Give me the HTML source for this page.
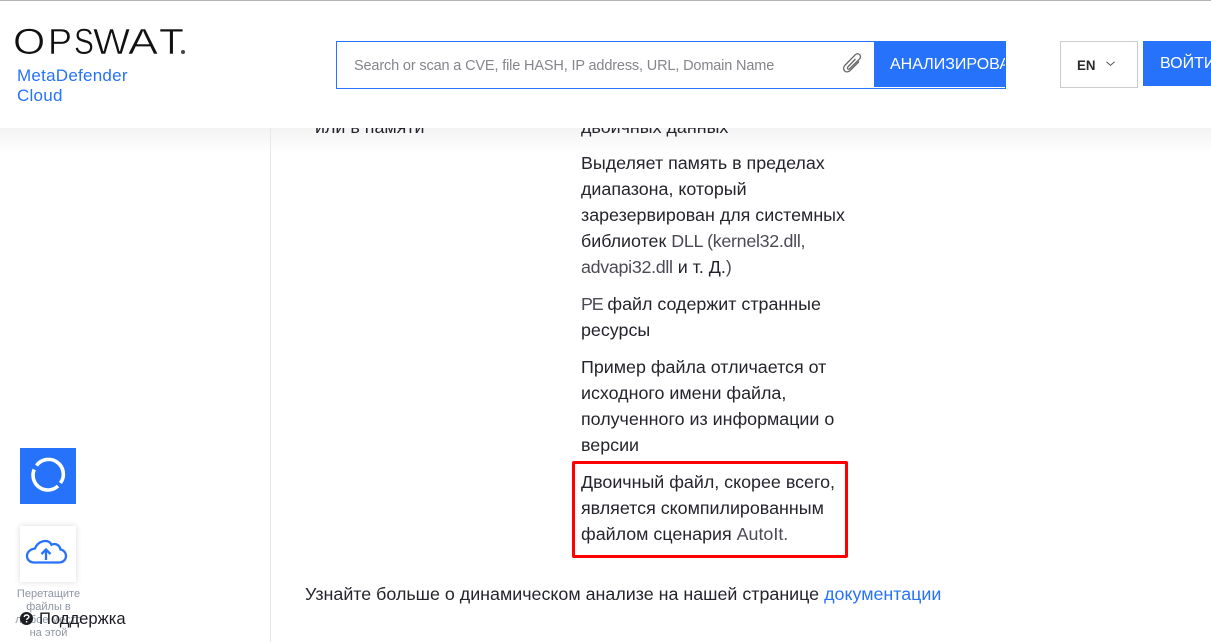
<!DOCTYPE html>
<html lang="ru">
<head>
<meta charset="utf-8">
<title>MetaDefender Cloud</title>
<style>
html,body{margin:0;padding:0;background:#fff}
body{width:1211px;height:642px;overflow:hidden;position:relative;font-family:"Liberation Sans",sans-serif;color:#1d1d25}
.a{position:absolute;white-space:nowrap}
.l{position:absolute;left:581px;font-size:17.870px;line-height:26px;white-space:nowrap;color:#24242c}
.g{color:#4b4b55}
.n{letter-spacing:-.3px}
#hdr{position:absolute;left:0;top:0;width:1211px;height:128px;background:#fff;z-index:5;border-top:1px solid #b5b5b5;box-sizing:border-box;overflow:hidden}
#shade{position:absolute;left:0;top:128px;width:1211px;height:25px;background:linear-gradient(#f3f3f3,#fff)}
.lg{position:absolute;top:21px;font-size:36px;line-height:40px;color:#111;transform-origin:left center;-webkit-text-stroke:.6px #fff}
</style>
</head>
<body>
<div id="shade"></div>
<div class="a" style="left:270px;top:128px;width:1px;height:514px;background:#e8e8e8"></div>

<div class="a" style="left:315px;top:114px;font-size:17.870px;line-height:26px;color:#24242c">или в памяти</div>
<div class="l" style="top:114px">двоичных данных</div>

<div class="l" style="top:150px">Выделяет память в пределах</div>
<div class="l" style="top:176px">диапазона, который</div>
<div class="l" style="top:202px">зарезервирован для системных</div>
<div class="l" style="top:228px">библиотек <span class="g n">DLL (kernel32.dll,</span></div>
<div class="l" style="top:254px"><span class="g n">advapi32.dll</span> и т. Д.<span class="g">)</span></div>
<div class="l" style="top:291px"><span class="g" style="letter-spacing:-1.200px">PE</span> файл содержит странные</div>
<div class="l" style="top:317px">ресурсы</div>
<div class="l" style="top:354px">Пример файла отличается от</div>
<div class="l" style="top:380px">исходного имени файла,</div>
<div class="l" style="top:406px">полученного из информации о</div>
<div class="l" style="top:432px">версии</div>
<div class="l" style="top:469px">Двоичный файл, скорее всего,</div>
<div class="l" style="top:495px">является скомпилированным</div>
<div class="l" style="top:521px">файлом сценария <span class="g">AutoIt.</span></div>

<div class="a" style="left:572px;top:461px;width:276px;height:97px;border:3.500px solid #fe0000;border-radius:2px;box-sizing:border-box"></div>

<div class="a" style="left:305px;top:581px;font-size:17.870px;line-height:26px;color:#24242c">Узнайте больше о динамическом анализе на нашей странице <span style="color:#2672fb">документации</span></div>

<div class="a" style="left:20px;top:448px;width:56px;height:56px;background:#2672fb"></div>
<svg class="a" style="left:20px;top:448px" width="56" height="56" viewBox="0 0 56 56">
<path d="M16.500 17.500A14.800 14.800 0 0 1 40.500 35" fill="none" stroke="#fff" stroke-width="3.600"/>
<path d="M38 38A14.800 14.800 0 0 1 14.200 21.500" fill="none" stroke="#fff" stroke-width="3.600"/>
</svg>

<div class="a" style="left:20px;top:526px;width:56px;height:56px;background:#fff;box-shadow:0 0 6px rgba(0,0,0,.14)"></div>
<svg class="a" style="left:20px;top:526px" width="56" height="56" viewBox="0 0 56 56">
<path d="M14 36.500h25c4 0 7-2.800 7-6.500 0-3.500-2.500-6-5.500-6.500-.5-3-3-5.500-6-5.500-1.200 0-2.200.3-3 .8C30 15.500 27.500 15 25.500 15c-5 0-9 3.200-10.500 7.500C10.500 23 7 26 7 30c0 3.700 3 6.500 7 6.500z" fill="none" stroke="#2672fb" stroke-width="2.300"/>
<path d="M26 34V23.500M21.500 28l4.500-4.500 4.500 4.500" fill="none" stroke="#2672fb" stroke-width="2.300"/>
</svg>
<div class="a" style="left:0;top:588px;width:97px;text-align:center;font-size:11px;line-height:13px;color:#8e96a3;white-space:normal">Перетащите<br>файлы в<br>любое место<br>на этой</div>
<svg class="a" style="left:19px;top:611px" width="15" height="15" viewBox="0 0 15 15">
<circle cx="7.500" cy="7.500" r="6.500" fill="#1d1d25"/>
<path d="M5.200 6c.2-1.300 1.100-2 2.400-2 1.300 0 2.300.8 2.300 1.900 0 1.600-2.300 1.500-2.300 3" fill="none" stroke="#fff" stroke-width="1.400"/>
<rect x="6.900" y="10" width="1.400" height="1.400" fill="#fff"/>
</svg>
<div class="a" style="left:39px;top:609px;font-size:16.600px;line-height:20px;color:#1d1d25">Поддержка</div>

<div id="hdr">
  <span class="lg" style="left:13px;transform:scaleX(1.15)">O</span>
  <span class="lg" style="left:48px">P</span>
  <span class="lg" style="left:73.700px;transform:scaleX(.83)">S</span>
  <span class="lg" style="left:93px;transform:scaleX(1.09)">W</span>
  <span class="lg" style="left:128px;transform:scaleX(1.25)">A</span>
  <span class="lg" style="left:159px;transform:scaleX(1.13)">T</span>
  <div class="a" style="left:181px;top:49px;width:4px;height:4px;border-radius:50%;background:#444"></div>

  <div class="a" style="left:17px;top:65px;font-size:17px;line-height:20px;letter-spacing:.25px;color:#2672fb">MetaDefender<br>Cloud</div>

  <div class="a" style="left:336px;top:40px;width:670px;height:48px;border:1px solid #2672fb;box-sizing:border-box;overflow:hidden;background:#fff">
    <div class="a" style="left:17px;top:14px;font-size:14.500px;letter-spacing:-.15px;line-height:20px;color:#85858c">Search or scan a CVE, file HASH, IP address, URL, Domain Name</div>
    <svg class="a" style="left:505px;top:11px" width="22" height="22" viewBox="0 0 22 22">
      <path d="M13.500 6 5.800 14c-.9 1-.2 2.400 1 2.200.4 0 .7-.3 1-.6L17.500 6c1.500-1.500 1.200-3.500 0-4.500-1.200-1-3-1-4.300.3L3.200 12c-2 2-2 4.500-.6 5.900 1.400 1.400 3.800 1.300 5.500-.4l9-9" fill="none" stroke="#666" stroke-width="1.300"/>
    </svg>
    <div class="a" style="left:537px;top:0;width:132px;height:45px;background:#2672fb;overflow:hidden">
      <div class="a" style="left:16px;top:13px;font-size:16px;line-height:20px;color:#fff">АНАЛИЗИРОВАТЬ</div>
    </div>
  </div>

  <div class="a" style="left:1060px;top:40px;width:78px;height:47px;border:1px solid #ccc;box-sizing:border-box;background:#fff">
    <div class="a" style="left:16px;top:13px;font-size:14px;line-height:20px;font-weight:700;color:#2b2b2b;transform:scaleX(.95);transform-origin:left">EN</div>
    <svg class="a" style="left:44px;top:17px" width="11" height="10" viewBox="0 0 12 10"><path d="M1.500 2.500 6 6.500l4.500-4" fill="none" stroke="#555" stroke-width="1.100"/></svg>
  </div>
  <div class="a" style="left:1143px;top:40px;width:68px;height:45px;background:#2672fb;overflow:hidden">
    <div class="a" style="left:17px;top:13px;font-size:16px;line-height:20px;color:#fff">ВОЙТИ</div>
  </div>
</div>
</body>
</html>
